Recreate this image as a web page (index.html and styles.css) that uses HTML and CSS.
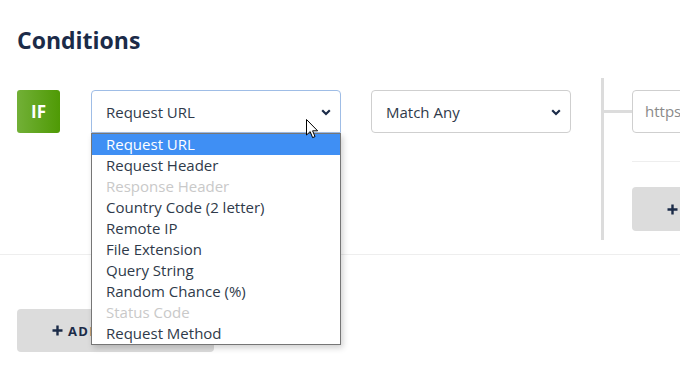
FILE: index.html
```html
<!DOCTYPE html>
<html>
<head>
<meta charset="utf-8">
<link rel="stylesheet" href="styles.css">
</head>
<body>
<div class="page">
  <h2 class="title">Conditions</h2>
  <div class="row">
    <div class="left">
      <div class="badge">IF</div>
      <div class="select select-focus select-type">
        <span>Request URL</span>
        <svg class="chev" width="10" height="7" viewBox="0 0 10 7"><path d="M1.2 1.3 L5 5 L8.8 1.3" fill="none" stroke="#1b2b48" stroke-width="2.2"/></svg>
        <ul class="dropdown">
          <li class="sel">Request URL</li>
          <li>Request Header</li>
          <li class="dis">Response Header</li>
          <li>Country Code (2 letter)</li>
          <li>Remote IP</li>
          <li>File Extension</li>
          <li>Query String</li>
          <li>Random Chance (%)</li>
          <li class="dis">Status Code</li>
          <li>Request Method</li>
        </ul>
        <svg class="cursor" width="13" height="20" viewBox="0 0 13 20"><path d="M0.5 0.5 L0.5 16 L4.2 12.6 L6.6 18.6 L9 17.6 L6.6 11.8 L11.6 11.8 Z" fill="#fff" stroke="#000" stroke-width="1" stroke-linejoin="round"/></svg>
      </div>
      <div class="select select-match">
        <span>Match Any</span>
        <svg class="chev" width="10" height="7" viewBox="0 0 10 7"><path d="M1.2 1.3 L5 5 L8.8 1.3" fill="none" stroke="#1b2b48" stroke-width="2.2"/></svg>
      </div>
    </div>
    <div class="branch">
      <div class="branch-row">
        <div class="connector"></div>
        <div class="input">https://</div>
      </div>
      <div class="branch-sep"></div>
      <div class="btn btn-small">
        <svg class="plus" width="11" height="11" viewBox="0 0 11 11"><path d="M5.5 0.5 V10.5 M0.5 5.5 H10.5" stroke="#1b2b48" stroke-width="2.4"/></svg>
        <span>ADD RULE</span>
      </div>
    </div>
  </div>
  <div class="sep"></div>
  <div class="btn btn-add">
    <svg class="plus" width="11" height="11" viewBox="0 0 11 11"><path d="M5.5 0.5 V10.5 M0.5 5.5 H10.5" stroke="#1b2b48" stroke-width="2.4"/></svg>
    <span>ADD CONDITION</span>
  </div>
</div>
</body>
</html>
```

FILE: styles.css
```css
html, body {
  margin: 0;
  padding: 0;
  background: #fff;
  overflow: hidden;
  width: 680px;
  height: 366px;
}
body {
  font-family: "Open Sans", "Noto Sans", sans-serif;
  color: #333a45;
}
.page {
  padding: 0 0 0 17px;
  width: 900px;
}
.title {
  margin: 0;
  padding-top: 23px;
  font-size: 23px;
  line-height: 34px;
  font-weight: 700;
  color: #1b2b48;
}
.row {
  display: flex;
  align-items: flex-start;
  margin-top: 21px;
}
.left {
  display: flex;
  align-items: flex-start;
  padding-top: 12px;
}
.badge {
  width: 43px;
  height: 43px;
  border-radius: 3px;
  background: linear-gradient(90deg, #72b037, #4f9a05);
  color: #fff;
  font-weight: 700;
  font-size: 17px;
  display: flex;
  align-items: center;
  justify-content: center;
}
.select {
  position: relative;
  box-sizing: border-box;
  height: 43px;
  border: 1px solid #cfcfcf;
  border-radius: 4px;
  display: flex;
  align-items: center;
  padding-left: 14px;
  font-size: 15px;
  color: #2f3a4a;
  background: #fff;
}
.select .chev {
  position: absolute;
  right: 9px;
  top: 18px;
}
.select-type {
  width: 250px;
  margin-left: 31px;
}
.select-focus {
  border-color: #9fbde6;
  border-bottom-left-radius: 0;
  border-bottom-right-radius: 0;
}
.select-match {
  width: 200px;
  margin-left: 30px;
}
.dropdown {
  position: absolute;
  left: -1px;
  top: 42px;
  width: 250px;
  box-sizing: border-box;
  margin: 0;
  padding: 0;
  list-style: none;
  background: #fff;
  border: 1px solid #767676;
  box-shadow: 2px 3px 6px rgba(0, 0, 0, 0.18);
  z-index: 5;
}
.dropdown li {
  height: 21px;
  line-height: 21px;
  padding-left: 14px;
  font-size: 15px;
  color: #2f3a4a;
  white-space: nowrap;
}
.dropdown li.sel {
  background: #3f8ff4;
  color: #fff;
}
.dropdown li.dis {
  color: #c9c9c9;
}
.cursor {
  position: absolute;
  left: 214px;
  top: 28px;
  z-index: 6;
}
.branch {
  margin-left: 30px;
  border-left: 3px solid #dcdcdc;
  height: 162px;
  box-sizing: border-box;
  padding-top: 12px;
}
.branch-row {
  display: flex;
  align-items: center;
}
.connector {
  width: 28px;
  height: 3px;
  background: #dcdcdc;
}
.input {
  box-sizing: border-box;
  width: 220px;
  height: 43px;
  border: 1px solid #cfcfcf;
  border-radius: 4px;
  padding-left: 12px;
  font-size: 15px;
  line-height: 41px;
  color: #8a8a8a;
}
.branch-sep {
  margin: 28px 0 0 28px;
  height: 1px;
  background: #eeeeee;
  width: 220px;
}
.btn {
  box-sizing: border-box;
  height: 44px;
  background: #dcdcdc;
  border-radius: 4px;
  font-weight: 700;
  font-size: 13px;
  letter-spacing: 1.4px;
  color: #1b2b48;
  display: flex;
  align-items: center;
  gap: 5px;
  padding-left: 35px;
  white-space: nowrap;
}
.btn-small {
  margin: 25px 0 0 28px;
  width: 220px;
}
.sep {
  margin-top: 14px;
  height: 1px;
  background: #eeeeee;
  width: 680px;
  margin-left: -17px;
}
.btn-add {
  margin-top: 54px;
  width: 197px;
  height: 43px;
}
```
